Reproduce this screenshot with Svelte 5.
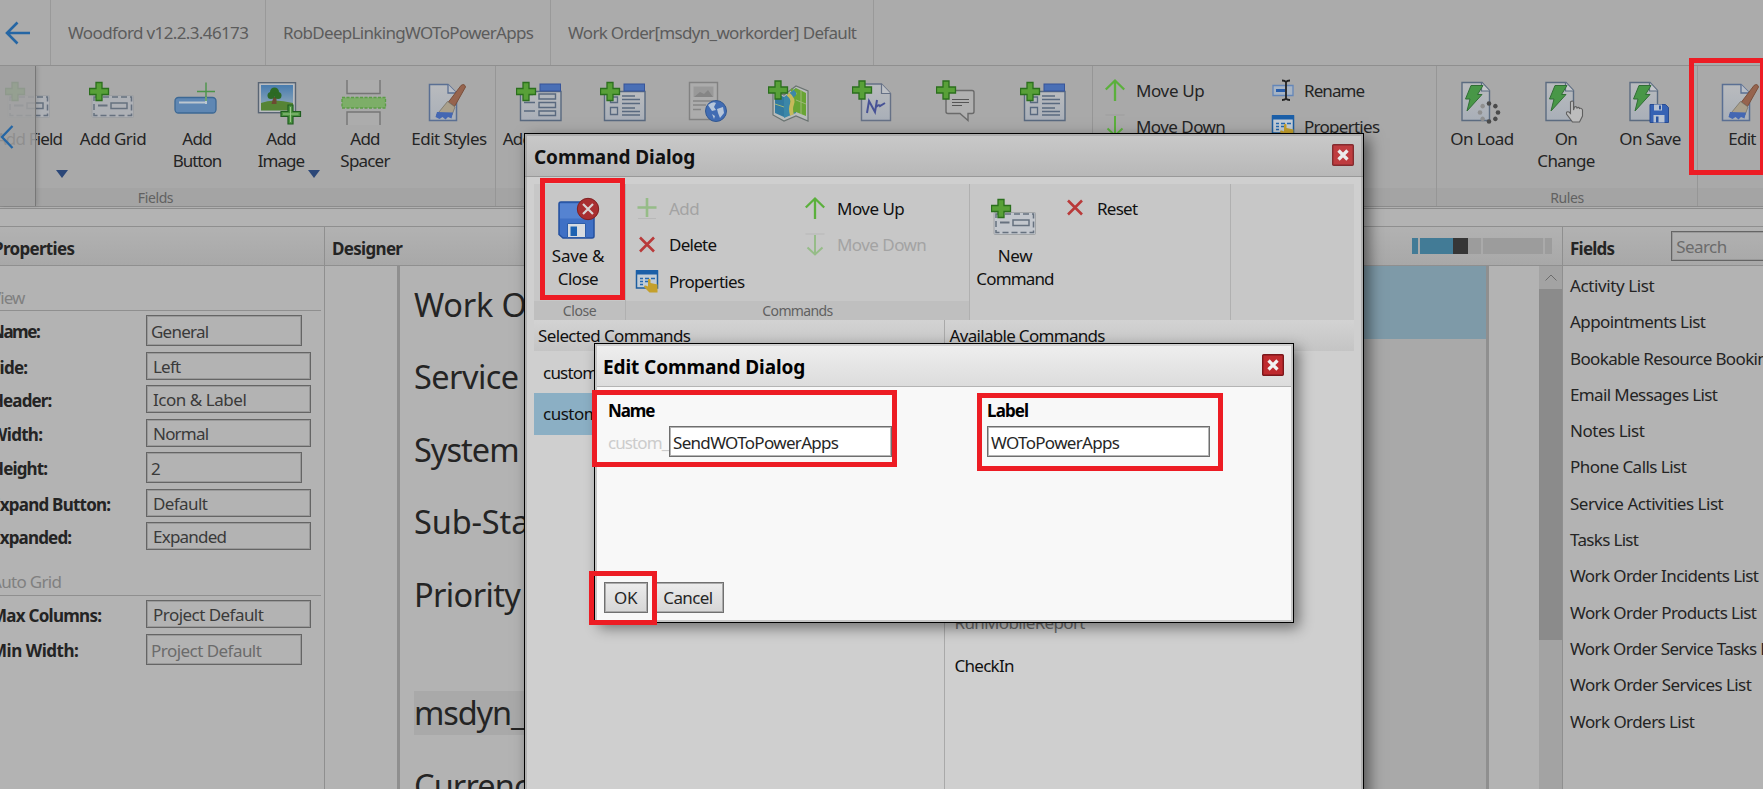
<script>
  // Spreads the letters of a label so that it occupies the given width.
  function fit(node, w) {
    if (!w) return;
    const natural = node.getBoundingClientRect().width;
    const n = node.textContent.length;
    node.style.letterSpacing = (w - 0.7 - natural) / n + 'px';
  }

  const fieldItems = [
    { icon: 'grid', lines: [['Add Field', 67]], arrow: true },
    { icon: 'grid', lines: [['Add Grid', 67]] },
    { icon: 'button', lines: [['Add', 30], ['Button', 49]] },
    { icon: 'image', lines: [['Add', 30], ['Image', 47]], arrow: true },
    { icon: 'spacer', lines: [['Add', 30], ['Spacer', 50]] },
    { icon: 'styles', lines: [['Edit Styles', 76]] }
  ];
  const viewItems = [
    { icon: 'detail', lines: [['Add Detail', 75]] },
    { icon: 'list', lines: [['Add List', 60]] },
    { icon: 'web', lines: [['Add', 30]] },
    { icon: 'map', lines: [['Add Map', 60]] },
    { icon: 'note', lines: [['Add', 30]] },
    { icon: 'chat', lines: [['Add Call', 62]] },
    { icon: 'list', lines: [['Add List', 62]] }
  ];
  const ruleItems = [
    { icon: 'onload', lines: [['On Load', 64]] },
    { icon: 'onchange', lines: [['On', 23], ['Change', 58]] },
    { icon: 'onsave', lines: [['On Save', 62]] }
  ];
  const viewProps = [
    { label: 'Name:', lw: 49, value: 'General', w: 58, top: 4, input: true },
    { label: 'Side:', lw: 37, value: 'Left', w: 28, top: 6 },
    { label: 'Header:', lw: 61, value: 'Icon & Label', w: 94, top: 5 },
    { label: 'Width:', lw: 52, value: 'Normal', w: 56, top: 6 },
    { label: 'Height:', lw: 57, value: '2', w: 10, top: 5, input: true },
    { label: 'Expand Button:', lw: 120, value: 'Default', w: 55, top: 6 },
    { label: 'Expanded:', lw: 81, value: 'Expanded', w: 74, top: 5 }
  ];
  const gridProps = [
    { label: 'Max Columns:', lw: 111, value: 'Project Default', w: 111, top: 4 },
    { label: 'Min Width:', lw: 88, value: 'Project Default', w: 111, top: 6, input: true, hint: true }
  ];
  const rows = [
    ['Work Order', 177], ['Service Account', 233], ['System Status', 202], ['Sub-Status', 163],
    ['Priority', 107], null, ['msdyn_serviceterritory', 326], ['Currency', 131]
  ];
  const lists = [
    ['Activity List', 85], ['Appointments List', 136], ['Bookable Resource Bookings List', 244],
    ['Email Messages List', 148], ['Notes List', 75], ['Phone Calls List', 117],
    ['Service Activities List', 154], ['Tasks List', 69], ['Work Order Incidents List', 189],
    ['Work Order Products List', 187], ['Work Order Service Tasks List', 216],
    ['Work Order Services List', 182], ['Work Orders List', 125]
  ];
  const dots = [0, 45, 90, 135, 180, 225, 270, 315];
</script>

{#snippet t(text, w)}<span class="t" use:fit={w}>{text}</span>{/snippet}

{#snippet plus()}
  <path d="M7 2.5h6v6h6.500v6h-6.500v6h-6v-6h-6.500v-6h6.500z" fill="#58a038" stroke="#2b6f1d" stroke-width="1.300" />
{/snippet}

{#snippet doc()}
  <path d="M4 2.500h20l7.500 8v30H4z" fill="url(#paper)" stroke="#5b6b80" stroke-width="1.400" />
  <path d="M23.500 2.500v8.500h8" fill="#c4c6ca" stroke="#5b6b80" stroke-width="1.200" />
{/snippet}

{#snippet icon(name)}
  <svg class="big" viewBox="0 0 48 46">
    {#if name === 'grid'}
      <rect class="sheet" x="3" y="15.500" width="41.500" height="22" rx="1" stroke="#9a9da0" stroke-width=".8" />
      <rect x="5" y="17" width="37.500" height="18.500" fill="none" stroke="#66717f" stroke-width="1.500" stroke-dasharray="6 3" />
      <path d="M9 25.500h9.500" stroke="#66717f" stroke-width="2" />
      <rect class="sheet" x="22" y="23" width="16" height="5.500" stroke="#66717f" stroke-width="1.500" />
      {@render plus()}
    {:else if name === 'button'}
      <rect x="2" y="17.500" width="41" height="15.500" rx="3.500" fill="#5f87b3" stroke="#3c6894" stroke-width="1.300" />
      <path d="M6 22.500h26M33 17v7" stroke="#bcc6cf" stroke-width="2" />
      <path d="M24 11.500h18M33 2.500v18.500" stroke="#4b9549" stroke-width="1.400" />
    {:else if name === 'image'}
      <rect x="1.500" y="2.700" width="37" height="30" fill="#b9bcc0" stroke="#596574" stroke-width="1.400" />
      <rect x="4" y="5" width="32" height="25.500" fill="url(#sky)" />
      <path d="M4 23q12-5 32 0v7.500H4z" fill="#568435" />
      <path d="M16.500 17h3v7h-5z" fill="#6d4a32" />
      <circle cx="17.500" cy="12" r="4.500" fill="#2d6a25" /><circle cx="14" cy="15.500" r="3.500" fill="#2d6a25" /><circle cx="21" cy="15.500" r="3.500" fill="#2d6a25" />
      <path d="M31 25h5v6.500h7.500v5H36V44h-5v-7.500h-7v-5h7z" fill="#4c9340" stroke="#1f5d20" stroke-width="1.200" />
      <path d="M33.500 27v15M26 34h15.500" stroke="#9cc78c" stroke-width="1" />
    {:else if name === 'spacer'}
      <path d="M6 0v13.500h33V0" fill="#acacac" stroke="#757575" stroke-width="1.400" />
      <path d="M6 45V32h33v13" fill="#acacac" stroke="#757575" stroke-width="1.400" />
      <rect x="1" y="17.500" width="43.500" height="10.500" fill="#7dae68" stroke="#5b9c46" stroke-width="1.300" stroke-dasharray="3 1.500" />
    {:else if name === 'styles'}
      <path d="M4.500 4.500h18.500l8.500 8.500v27.500h-27z" fill="url(#paper)" stroke="#5a6f93" stroke-width="1.500" />
      <path d="M23 4.500v8.500h8.500" fill="#b9bec6" stroke="#5a6f93" stroke-width="1.300" />
      <path d="M36 5.500q3.500-2.500 4.500 1.500L29.500 26.500l-6-4.500z" fill="#96644e" stroke="#7a4f3b" stroke-width="1" />
      <path d="M22.500 21.500l7.500 5.500-3 8H11.500z" fill="#aaa08c" stroke="#77746a" stroke-width=".8" />
      <path d="M12 32l16 .5-1.500 6-3.500-1.500-2.500 2.500-3-2.500-3 2-4-2z" fill="#4467b3" />
    {:else if name === 'detail'}
      <path d="M4.500 11.500h40.500v29H4.500z" fill="url(#paper)" stroke="#59697f" stroke-width="1.400" />
      <rect x="24" y="4" width="20.500" height="7" fill="#4a6fb5" stroke="#37549a" />
      <path d="M8 14.500h9M8 22.500h11M8 31h11" stroke="#59697f" stroke-width="1.300" />
      <path d="M23 14h16.500v5H23zM23 22.500h16.500v5H23zM23 31h16.500v4.500H23z" fill="#b1b6bc" stroke="#59697f" stroke-width="1.400" />
      {@render plus()}
    {:else if name === 'list'}
      <path d="M4.500 11.500h40.500v29H4.500z" fill="url(#paper)" stroke="#59697f" stroke-width="1.400" />
      <rect x="24" y="4" width="20.500" height="7" fill="#4a6fb5" stroke="#37549a" />
      <path d="M10.500 17h7v5.500h-7zM10.500 27.500h7v7h-7z" fill="#b1b6bc" stroke="#59697f" stroke-width="1.300" />
      <path d="M22 16h13M22 19.500h18M22 23.500h18M22 28h13M22 31.500h18M22 35h18" stroke="#59697f" stroke-width="1.300" />
      {@render plus()}
    {:else if name === 'web'}
      <path d="M5.500 2.500h28v37h-28z" fill="#acacac" stroke="#828282" stroke-width="1.400" />
      <rect x="9.500" y="6.500" width="20" height="10.500" fill="#999" /><path d="M10 17l6-5 4 2 4-4 5 7z" fill="#858585" />
      <path d="M9 21h21M9 25h13M9 29.500h8" stroke="#858585" stroke-width="1.500" />
      <circle cx="32" cy="31" r="10.500" fill="#416cb3" stroke="#335891" />
      <path d="M24 25q5-4 8-2l-2 4 2 3-4 1zM33 29l6-2 1 6-4 5-2-5zM28 34l3 2-1 3z" fill="#b6c5d9" />
    {:else if name === 'map'}
      <path d="M5 10l11 5 12-9 12 5v30l-12-5-12 5-11-6z" fill="#b9bdbc" stroke="#6b7472" stroke-width="1.200" />
      <path d="M7 13l9 4v20l-9-4z" fill="#327aa0" />
      <path d="M16 17l12-9v25l-12 5z" fill="#3b87a8" />
      <path d="M23 12l5-4 10 5v23l-10-4-6 2q4-5 1-9t3-8-3-9z" fill="#68a434" />
      <path d="M20 14q6 5 4 10t0 11" fill="none" stroke="#c6b95b" stroke-width="4" />
      <path d="M7 24l9 3M28 20l10 4M33 10v24" stroke="#9db777" stroke-width="1" />
      <g transform="translate(0 -1.500)">{@render plus()}</g>
    {:else if name === 'note'}
      <path d="M9.500 4h20l9 9.500v27h-29z" fill="url(#paper)" stroke="#667186" stroke-width="1.400" />
      <path d="M29.500 4v9.500h9" fill="#bec1c6" stroke="#667186" stroke-width="1.200" />
      <path d="M15 33l2-12 6 11 2-12M17 21l6 11M24 27q3-3 4-1l5-3" fill="none" stroke="#475296" stroke-width="2" />
      <g transform="translate(0 -1.500)">{@render plus()}</g>
    {:else if name === 'chat'}
      <path d="M12 10.500h24q2 0 2 2v19q0 2-2 2h-4v7l-8-7H12q-2 0-2-2v-19q0-2 2-2z" fill="#b0b0b0" stroke="#6a6a6a" stroke-width="1.400" />
      <path d="M16 19.500h17M16 22.500h17M16 25.500h10" stroke="#555" stroke-width="1.200" />
      <g transform="translate(0 -1.500)">{@render plus()}</g>
    {:else}
      {@render doc()}
      <path d="M13 5.500h12l-5.500 9H24L9 31l3-12H7.500z" fill="#489747" stroke="#316d36" stroke-width="1" />
      {#if name === 'onload'}
        {#each dots as d, i}
          <circle cx="31" cy="23.500" r="2.300" fill={i > 4 ? '#8f8f8f' : '#4a4a4a'} transform={`rotate(${d} 31 32.500)`} />
        {/each}
      {:else if name === 'onchange'}
        <path d="M28.500 22q2-2 3 0v8l1-3q2-1 2.500 1 2-1.500 2.500.5 2-1 3 1.500v6l-3 6h-7l-6-8q-.5-3 2.500-2l1.500 1.500z" fill="#bdbdbd" stroke="#5f5f5f" stroke-width="1.100" />
      {:else}
        <path d="M24 24.500h15.500l3 3v15H24z" fill="#3662b4" stroke="#294b90" />
        <path d="M28 24.500h8v6h-8zM27.500 35h11v7.500h-11z" fill="#b8c2d2" /><path d="M33 25.500h2v4h-2zM30 36.500h2.500v6H30z" fill="#28529f" />
      {/if}
    {/if}
  </svg>
{/snippet}

{#snippet item(it)}
  <div class="item">
    {@render icon(it.icon)}
    {#each it.lines as l}<div class="line">{@render t(l[0], l[1])}</div>{/each}
    {#if it.arrow}<i class="caret"></i>{/if}
  </div>
{/snippet}

{#snippet small(name)}
  <svg class="small" viewBox="0 0 24 24">
    {#if name === 'up'}
      <path d="M12 23V2.500M2.800 11.500L12 2.500l9.200 9" fill="none" stroke="#5bb03c" stroke-width="2.300" />
    {:else if name === 'down'}
      <path d="M12 2v20M4.500 14.500L12 21.500l7.500-7" fill="none" stroke="#5bb03c" stroke-width="2" /><path d="M2.500 1h19" stroke="#999" stroke-width=".7" />
    {:else if name === 'add'}
      <path d="M12 2v19M2.500 11.500h19" stroke="#5bb03c" stroke-width="2.600" /><path d="M3 22.500h18" stroke="#999" stroke-width=".7" />
    {:else if name === 'del'}
      <path d="M5 4.500l14 14M19 4.500l-14 14" stroke="#b93a3a" stroke-width="2.600" />
    {:else if name === 'rename'}
      <path d="M2 7.500h20v10H2z" fill="#a8b4c3" stroke="#6386b9" stroke-width="1.300" /><path d="M5 12.500h9" stroke="#285eac" stroke-width="3" />
      <path d="M11 2.500q3 0 4 1.500 1-1.500 4-1.500M11 22q3 0 4-1.500 1 1.500 4 1.500M15 4v17" fill="none" stroke="#222" stroke-width="1.800" />
    {:else}
      <path d="M1.500 2h21v17h-21z" fill="#c2ccd6" stroke="#1c5d9f" stroke-width="1.500" /><path d="M1 1h22v4.500H1z" fill="#1b5fa8" />
      <path d="M5 9.500h3M10 9.500h4M16 9.500h4M5 12.500h3M10 12.500h3M5 15.500h3" stroke="#2569b0" stroke-width="1.500" />
      <path d="M13 10.500q2-1.500 2.500.5v3l7 1.500v8h-8L9 18q0-2.500 4-.5z" fill="#c4a02c" />
    {/if}
  </svg>
{/snippet}

{#snippet closeX()}
  <svg class="close" viewBox="0 0 22 22">
    <rect x=".7" y=".7" width="20.600" height="20.600" rx="1" fill="#bf2a2e" stroke="#7c171b" stroke-width="1.400" />
    <path d="M6.500 6.500l9 9M15.500 6.500l-9 9" stroke="#f1f1f1" stroke-width="3.300" />
  </svg>
{/snippet}

{#snippet prop(p)}
  <div class="prop" style:margin-top={`${p.top}px`}>
    <b>{@render t(p.label, p.lw)}</b>
    <div class="field" class:input={p.input} class:hint={p.hint}>{@render t(p.value, p.w)}</div>
  </div>
{/snippet}

<svg width="0" height="0" class="defs">
  <defs>
    <linearGradient id="paper" x1="0" y1="0" x2="0" y2="1"><stop offset="0" stop-color="#b9bbbe" /><stop offset="1" stop-color="#a9afb8" /></linearGradient>
    <linearGradient id="sky" x1="0" y1="0" x2="0" y2="1"><stop offset="0" stop-color="#487cae" /><stop offset="1" stop-color="#9bafbd" /></linearGradient>
  </defs>
</svg>

<div class="app">
  <header>
    <div class="back"><svg viewBox="0 0 26 24"><path d="M25 12H2M12.500 1.500L2 12l10.500 10.500" fill="none" stroke="#2566a4" stroke-width="2.600" /></svg></div>
    <div class="crumb">{@render t('Woodford v12.2.3.46173', 181)}</div>
    <div class="crumb">{@render t('RobDeepLinkingWOToPowerApps', 251)}</div>
    <div class="crumb">{@render t('Work Order[msdyn_workorder] Default', 289)}</div>
  </header>

  <div class="ribbon">
    <div class="group first"><div class="items">{#each fieldItems as it}{@render item(it)}{/each}</div><div class="strip">{@render t('Fields', 36)}</div></div>
    <div class="group views"><div class="items">{#each viewItems as it}{@render item(it)}{/each}</div><div class="strip"></div></div>
    <div class="group layout">
      <div class="cmds">
        <div class="cmd">{@render small('up')}{@render t('Move Up', 69)}</div>
        <div class="cmd">{@render small('rename')}{@render t('Rename', 61)}</div>
        <div class="cmd">{@render small('down')}{@render t('Move Down', 90)}</div>
        <div class="cmd">{@render small('props')}{@render t('Properties', 76)}</div>
      </div>
      <div class="strip"></div>
    </div>
    <div class="group rules"><div class="items">{#each ruleItems as it}{@render item(it)}{/each}</div><div class="strip">{@render t('Rules', 34)}</div></div>
    <div class="group edit"><div class="items">{@render item({ icon: 'styles', lines: [['Edit', 28]] })}</div><div class="strip"></div></div>
    <div class="scroller"><svg viewBox="0 0 14 24"><path d="M12.500 1L2 12l10.500 11" fill="none" stroke="#2566a4" stroke-width="2.300" /></svg></div>
  </div>

  <main>
    <section class="properties">
      <div class="head"><b>{@render t('Properties', 82)}</b></div>
      <div class="legend first">{@render t('View', 34)}</div>
      {#each viewProps as p}{@render prop(p)}{/each}
      <div class="legend">{@render t('Auto Grid', 71)}</div>
      {#each gridProps as p}{@render prop(p)}{/each}
    </section>
    <section class="designer">
      <div class="head">
        <b>{@render t('Designer', 71)}</b>
        <div class="zoom"><i></i><i></i><i></i><i></i><i></i><i></i></div>
      </div>
      <div class="canvas">
        <div class="form">
          {#each rows as r, i}
            <div class="row">{#if r}<span class:tag={i === 6}>{@render t(r[0], r[1])}</span>{/if}</div>
          {/each}
        </div>
        <div class="tabs"><div class="active"></div></div>
        <div class="spare"></div>
        <div class="bar"><div class="btn"><svg viewBox="0 0 12 7"><path d="M.5 6.500L6 1l5.500 5.500" fill="none" stroke="#6c6c6c" /></svg></div><div class="thumb"></div></div>
      </div>
    </section>
    <section class="fields">
      <div class="head"><b>{@render t('Fields', 45)}</b><div class="search">{@render t('Search', 51)}</div></div>
      {#each lists as l}<div class="entry">{@render t(l[0], l[1])}</div>{/each}
    </section>
  </main>

  <div class="dialog command">
    <div class="title"><b>{@render t('Command Dialog', 162)}</b>{@render closeX()}</div>
    <div class="tools">
      <div class="tg save">
        <div class="items">
          <div class="item">
            <svg class="big" viewBox="0 0 48 46">
              <path d="M5 7q0-2 2-2h31q2 0 2 2v32q0 2-2 2H9l-4-3.500z" fill="#3f70c5" stroke="#24509f" stroke-width="1.500" />
              <path d="M6 6.500h33v15H6z" fill="#6490d8" opacity=".6" />
              <path d="M13.500 26.500h18v14h-18z" fill="#d7dbe0" stroke="#2d5da9" stroke-width="1" /><path d="M16.500 29.500h6.500v9.500h-6.500z" fill="#1c62b2" />
              <circle cx="34" cy="12" r="10.700" fill="#a92f31" stroke="#7f1e20" /><path d="M29 7l10 10M39 7L29 17" stroke="#d8d4d4" stroke-width="2.200" />
            </svg>
            <div class="line">{@render t('Save &', 53)}</div>
            <div class="line">{@render t('Close', 41)}</div>
          </div>
        </div>
        <div class="strip">{@render t('Close', 34)}</div>
      </div>
      <div class="tg list">
        <div class="cmds">
          <div class="cmd off">{@render small('add')}{@render t('Add', 31)}</div>
          <div class="cmd">{@render small('up')}{@render t('Move Up', 68)}</div>
          <div class="cmd">{@render small('del')}{@render t('Delete', 48)}</div>
          <div class="cmd off">{@render small('down')}{@render t('Move Down', 90)}</div>
          <div class="cmd">{@render small('props')}{@render t('Properties', 76)}</div>
        </div>
        <div class="strip">{@render t('Commands', 71)}</div>
      </div>
      <div class="tg fresh">
        <div class="item">{@render icon('grid')}<div class="line">{@render t('New', 35)}</div><div class="line">{@render t('Command', 78)}</div></div>
        <div class="cmd">{@render small('del')}{@render t('Reset', 41)}</div>
      </div>
    </div>
    <div class="lists">
      <div class="col">
        <div class="caption">{@render t('Selected Commands', 153)}</div>
        <div class="opt">{@render t('custom_SendWO', 126)}</div>
        <div class="opt on">{@render t('custom_SendWOToPowerApps', 232)}</div>
      </div>
      <div class="col">
        <div class="caption">{@render t('Available Commands', 156)}</div>
        <div class="opt low">{@render t('RunMobileReport', 131)}</div>
        <div class="opt">{@render t('CheckIn', 60)}</div>
      </div>
    </div>
  </div>

  <div class="dialog editor">
    <div class="title"><b>{@render t('Edit Command Dialog', 203)}</b>{@render closeX()}</div>
    <div class="body">
      <div class="pair">
        <div><b>{@render t('Name', 47)}</b><div class="ctl"><span class="prefix">{@render t('custom_', 61)}</span><div class="box">{@render t('SendWOToPowerApps', 166)}</div></div></div>
        <div><b>{@render t('Label', 42)}</b><div class="ctl"><div class="box">{@render t('WOToPowerApps', 129)}</div></div></div>
      </div>
      <div class="buttons"><div class="push">{@render t('OK', 24)}</div><div class="push">{@render t('Cancel', 50)}</div></div>
    </div>
  </div>

  <div class="mark m1"></div>
  <div class="mark m2"></div>
  <div class="mark m3"></div>
  <div class="mark m4"></div>
  <div class="mark m5"></div>
</div>

<style>
  :global(body) { margin: 0; overflow: hidden; }
  .app { position: relative; width: 1763px; height: 789px; overflow: hidden; background: #b3b3b3; color: #242424; font: 17px/23px "Noto Sans", "Open Sans", sans-serif; display: flex; flex-direction: column; }
  .app *, .app { box-sizing: border-box; }
  .defs { position: absolute; }
  .t { white-space: pre; }
  svg { display: block; flex: none; }
  b { font-weight: 700; }

  header { display: flex; height: 66px; background: #ababab; border-bottom: 1px solid #8f8f8f; flex: none; color: #5c5c5c; }
  .back { width: 51px; border-right: 1px solid #999; padding: 21px 0 0 5px; }
  .back svg { width: 26px; height: 24px; }
  .crumb { padding: 21px 17px 0 17px; border-right: 1px solid #999; width: 215px; }
  .crumb:nth-child(3) { width: 285px; }
  .crumb:nth-child(4) { width: 323px; }

  .ribbon { position: relative; display: flex; height: 143px; background: #a9a9a9; border-bottom: 1px solid #8c8c8c; flex: none; box-shadow: inset 0 -1px #b0b0b0, inset 0 -2px #8c8c8c; padding-bottom: 2px; overflow: hidden; }
  .group { display: flex; flex-direction: column; justify-content: space-between; border-right: 1px solid #969696; flex: none; height: 140px; }
  .group.first { width: 509px; margin-left: -13px; }
  .group.views { width: 597px; }
  .group.layout { width: 344px; }
  .group.rules { width: 261px; }
  .group.edit { width: 90px; }
  .items { display: flex; padding-top: 14px; }
  .views .items { padding-left: 2px; }
  .rules .items { padding-left: 3px; }
  .edit .items { padding-left: 2px; }
  .item { position: relative; width: 84px; display: flex; flex-direction: column; align-items: center; flex: none; }
  .big { width: 48px; height: 46px; margin-bottom: 1px; }
  .sheet { fill: #aeb1b6; }
  .line { height: 22px; text-align: center; }
  .caret { position: absolute; right: 3px; top: 90px; border: 6.500px solid transparent; border-top: 8px solid #2b4778; border-bottom: 0; }
  .strip { height: 18px; background: #a4a4a4; color: #616161; font-size: 14px; line-height: 19px; text-align: center; }
  .first .strip { padding-right: 171px; }
  .cmds { display: grid; grid-template-columns: 168px 1fr; grid-auto-rows: 36px; padding: 6px 0 0 10px; }
  .cmd { display: flex; align-items: center; gap: 9px; }
  .small { width: 24px; height: 24px; }
  .scroller { position: absolute; left: 0; top: 0; width: 36px; height: 140px; background: rgba(160, 160, 160, .86); border-right: 1px solid #777; box-shadow: 2px 0 4px rgba(0, 0, 0, .12); padding-top: 59px; }
  .scroller svg { width: 14px; height: 24px; }

  main { display: flex; flex: 1; margin-top: 17px; border-top: 1px solid #8f8f8f; min-height: 0; }
  section { overflow: hidden; flex: none; }
  .head { height: 39px; background: linear-gradient(#b2b2b2, #a8a8a8); border-bottom: 1px solid #8f8f8f; display: flex; padding: 10px 0 0 8px; }
  .properties { width: 325px; border-right: 1px solid #8f8f8f; }
  .properties .head { padding-left: 0; text-indent: -7px; }
  .legend { width: 321px; height: 27px; line-height: 25px; margin-top: 19px; border-bottom: 1px solid #8f8f8f; color: #808080; text-indent: -9px; }
  .legend.first { height: 26px; margin-top: 19px; }
  .prop { display: flex; align-items: center; text-indent: -9px; }
  .prop b { width: 146px; padding-top: 2px; }
  .field { width: 165px; height: 28px; border: 1px solid #656565; box-shadow: inset 0 0 0 1px #999; line-height: 27px; padding-left: 6px; text-indent: 0; color: #3a3a3a; }
  .field.input { width: 156px; height: 31px; line-height: 31px; padding-left: 4px; }
  .field.hint { color: #6b6b6b; }
  .designer { width: 1238px; border-right: 1px solid #8f8f8f; }
  .designer .head { justify-content: space-between; padding-left: 7px; padding-right: 10px; }
  .zoom { display: flex; margin-top: 1px; height: 16px; background: #aaa; }
  .zoom i { background: #9c9c9c; width: 13px; margin-right: 2px; }
  .zoom i:nth-child(1) { background: #427b96; width: 6px; }
  .zoom i:nth-child(2) { background: #427b96; width: 33px; margin: 0; }
  .zoom i:nth-child(3) { background: #363636; width: 15px; margin: 0; }
  .zoom i:nth-child(5) { width: 60px; }
  .zoom i:nth-child(6) { width: 7px; margin: 0; }
  .canvas { display: flex; height: 523px; padding-left: 72px; }
  .form { width: 700px; border-left: 3px solid #8f8f8f; padding: 5.500px 0 0 14px; font-size: 32.500px; line-height: 44px; color: #242424; overflow: hidden; }
  .row { height: 72.600px; padding-top: 11px; white-space: nowrap; }
  .row:nth-child(n + 6) { position: relative; top: -27px; }
  .tag { background: #a9a9a9; display: inline-block; height: 44px; }
  .tabs { width: 392px; background: #a9a9a9; border-right: 3px solid #8f8f8f; }
  .active { height: 73px; background: #7e9aa8; }
  .spare { width: 50px; }
  .bar { width: 23px; background: #a3a3a3; }
  .btn { height: 23px; padding: 8px 0 0 6px; }
  .btn svg { width: 12px; height: 7px; }
  .thumb { height: 351px; background: #8b8b8b; }
  .fields { width: 200px; }
  .fields .head { padding-left: 7px; padding-bottom: 0; margin-bottom: 2px; gap: 57px; }
  .search { width: 160px; height: 30px; flex: none; margin-top: -6px; border: 1px solid #656565; box-shadow: inset 0 0 0 1px #999; padding-left: 4px; line-height: 30px; color: #6b6b6b; }
  .entry { height: 36.300px; line-height: 36px; padding-left: 7px; white-space: nowrap; }

  .dialog { position: absolute; border: 1px solid #000; box-shadow: 5px 5px 14px rgba(0, 0, 0, .5); display: flex; flex-direction: column; }
  .title { display: flex; justify-content: space-between; height: 43px; padding: 10px 9px 0 9px; font-size: 19px; line-height: 26px; flex: none; }
  .close { width: 22px; height: 22px; }
  .command { left: 524px; top: 133px; width: 840px; height: 700px; background: #cfcfcf; color: #111; outline: 0; }
  .command::after { content: ''; position: absolute; inset: 0; border: 2px solid rgba(130, 130, 130, .4); border-bottom: 0; pointer-events: none; }
  .command .title { background: linear-gradient(#c9c9c9, #b8b8b8); border-bottom: 1px solid #999; }
  .command .close { opacity: .88; }
  .command .sheet { fill: #c3c7cd; }
  .tools { display: flex; margin: 7px 9px 0; height: 136px; background: #c7c7c7; }
  .tg { border-right: 1px solid #b0b0b0; display: flex; flex-direction: column; justify-content: space-between; }
  .tg .strip { height: 19px; background: #bfbfbf; line-height: 20px; }
  .tg.save { width: 92px; padding: 0; }
  .tg.save .item { left: 2px; }
  .tg .line { height: 23px; }
  .tg.list { width: 344px; }
  .tg.list .cmds { padding: 6px 0 0 9px; grid-auto-rows: 36.500px; }
  .tg.list .cmd, .fresh .cmd { gap: 10px; }
  .tg.save .items { padding-top: 13px; }
  .off { color: #a3a3a3; }
  .off .small { opacity: .45; }
  .tg.fresh { width: 261px; flex-direction: row; justify-content: flex-start; padding-left: 3px; }
  .fresh .item { padding-top: 13px; }
  .fresh .cmd { height: 36px; margin: 6px 0 0 6px; }
  .lists { display: flex; margin: 0 9px; flex: 1; }
  .col { width: 410px; }
  .col:first-child { width: 411px; border-right: 1px solid #a9a9a9; }
  .caption { height: 31px; background: linear-gradient(#d3d3d3, #c4c4c4); padding: 4px 0 0 4px; }
  .col:last-child .caption { padding-left: 5px; }
  .opt { height: 42px; line-height: 43px; padding-left: 9px; }
  .on { background: #8bafc4; line-height: 41px; }
  .low { margin-top: 251px; color: #6c6c6c; line-height: 42px; }
  .col:last-child .opt { padding-left: 10px; }

  .editor { left: 594px; top: 343px; width: 700px; height: 280px; background: #f8f8f8; color: #000; box-shadow: inset 0 0 0 2px #c6c6c6, 5px 5px 13px rgba(0, 0, 0, .45); padding: 0 2px 2px; }
  .editor .title { background: linear-gradient(#eee, #dcdcdc); border-bottom: 1px solid #b4b4b4; border-top: 2px solid #d0d0d0; padding: 8px 7px 0 6px; margin: 0; }
  .body { flex: 1; display: flex; flex-direction: column; justify-content: space-between; padding: 12px 0 7px 7px; color: #262626; }
  .pair { display: grid; grid-template-columns: 379px 1fr; padding-left: 4px; }
  .pair b { color: #000; }
  .ctl { display: flex; margin-top: 4px; align-items: center; }
  .prefix { color: #ccc; width: 61px; padding-top: 1px; }
  .box { width: 223px; height: 31px; border: 1px solid #6e6e6e; box-shadow: inset 0 0 0 1px #b5b5b5; background: #fff; line-height: 32px; padding-left: 3px; }
  .buttons { display: flex; gap: 6px; }
  .push { height: 31px; border: 1px solid #707070; box-shadow: inset 0 0 0 1px #aaa; background: linear-gradient(#ececec, #d6d6d6); padding: 0 10px 0 8px; line-height: 29px; }
  .push:first-child { padding: 0 10px 0 9px; }

  .mark { position: absolute; border: 5px solid #ed1c24; }
  .m1 { left: 1689px; top: 58px; width: 76px; height: 117px; }
  .m2 { left: 540px; top: 178px; width: 85px; height: 122px; }
  .m3 { left: 592px; top: 390px; width: 305px; height: 77px; }
  .m4 { left: 977px; top: 393px; width: 246px; height: 78px; }
  .m5 { left: 589px; top: 571px; width: 68px; height: 54px; }
</style>
